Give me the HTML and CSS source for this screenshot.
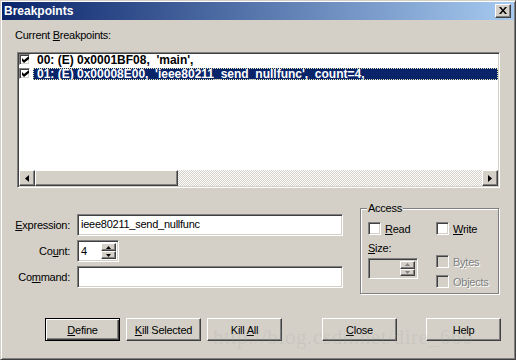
FILE: index.html
```html
<!DOCTYPE html>
<html lang="en">
<head>
  <meta charset="UTF-8">
  <title>Breakpoints</title>
  <link rel="stylesheet" href="styles.css">
</head>
<body>

  <div class="window">
    <div class="titlebar">
      <span class="title">Breakpoints</span>
      <span class="title-close raised">
        <svg width="8" height="7" viewBox="0 0 8 7"><path d="M0 0h2l2 2.5 2-2.5h2L5 3.5 8 7H6L4 4.5 2 7H0l3-3.5z" fill="#000"/></svg>
      </span>
    </div>

    <div class="body">
      <div class="caption">Current <u>B</u>reakpoints:</div>

      <div class="listbox sunken">
        <div class="list-rows">
          <div class="row">
            <span class="list-check sunken">
              <svg width="7" height="7" viewBox="0 0 7 7"><path d="M0 2l2 2 5-4v3L2 7 0 5z" fill="#000"/></svg>
            </span>
            <span class="row-text">00: (E) 0x0001BF08,  'main',</span>
          </div>
          <div class="row">
            <span class="list-check sunken">
              <svg width="7" height="7" viewBox="0 0 7 7"><path d="M0 2l2 2 5-4v3L2 7 0 5z" fill="#000"/></svg>
            </span>
            <span class="row-text selected">01: (E) 0x00008E00,  'ieee80211_send_nullfunc',  count=4,</span>
          </div>
        </div>
        <div class="hscroll">
          <span class="sb-btn raised">
            <svg width="4" height="7" viewBox="0 0 4 7"><path d="M4 0v7L0 3.5z" fill="#000"/></svg>
          </span>
          <span class="sb-thumb raised"></span>
          <span class="sb-track"></span>
          <span class="sb-btn raised">
            <svg width="4" height="7" viewBox="0 0 4 7"><path d="M0 0v7l4-3.5z" fill="#000"/></svg>
          </span>
        </div>
      </div>

      <div class="lower">
        <div class="fields">
          <span class="field-label"><u>E</u>xpression:</span>
          <div class="edit sunken">ieee80211_send_nullfunc</div>

          <span class="field-label">Co<u>u</u>nt:</span>
          <div class="count-box sunken">
            <span class="count-text">4</span>
            <span class="spin">
              <span class="spin-btn raised"><svg width="5" height="3" viewBox="0 0 5 3"><path d="M2.5 0L5 3H0z" fill="#000"/></svg></span>
              <span class="spin-btn raised"><svg width="5" height="3" viewBox="0 0 5 3"><path d="M0 0h5L2.5 3z" fill="#000"/></svg></span>
            </span>
          </div>

          <span class="field-label">Co<u>m</u>mand:</span>
          <div class="edit sunken"></div>
        </div>

        <fieldset class="access">
          <legend>Access</legend>
          <div class="access-cols">
            <div class="access-col first">
              <div class="check-label"><span class="box sunken"></span><span><u>R</u>ead</span></div>
              <div class="size-label"><u>S</u>ize:</div>
              <div class="size-box sunken">
                <span class="spin">
                  <span class="spin-btn raised"><svg width="5" height="3" viewBox="0 0 5 3"><path d="M2.5 0L5 3H0z" fill="#808080"/></svg></span>
                  <span class="spin-btn raised"><svg width="5" height="3" viewBox="0 0 5 3"><path d="M0 0h5L2.5 3z" fill="#808080"/></svg></span>
                </span>
              </div>
            </div>
            <div class="access-col">
              <div class="check-label"><span class="box sunken"></span><span><u>W</u>rite</span></div>
              <div class="check-label disabled bytes"><span class="box sunken"></span><span>B<u>y</u>tes</span></div>
              <div class="check-label disabled objects"><span class="box sunken"></span><span>Objects</span></div>
            </div>
          </div>
        </fieldset>
      </div>

      <div class="buttons">
        <span class="btn default"><span><u>D</u>efine</span></span>
        <span class="btn raised"><span><u>K</u>ill Selected</span></span>
        <span class="btn raised"><span>Kill <u>A</u>ll</span></span>
        <span class="btn raised close"><span><u>C</u>lose</span></span>
        <span class="btn raised help"><span>Help</span></span>
      </div>
    </div>

    <div class="watermark">http://blog.csdn.net/dire_666</div>
  </div>

</body>
</html>
```

FILE: styles.css
```css
* {
  margin: 0;
  padding: 0;
  box-sizing: border-box;
}

body {
  font-family: 'Liberation Sans', Arial, sans-serif;
  font-size: 11px;
  letter-spacing: -0.25px;
  color: #000;
  background: #d4d0c8;
}

/* 3D borders */
.raised {
  background-color: #d4d0c8;
  border: 1px solid;
  border-color: #fff #404040 #404040 #fff;
  box-shadow: inset -1px -1px #808080;
}

.sunken {
  background-color: #fff;
  border: 1px solid;
  border-color: #808080 #fff #fff #808080;
  box-shadow: inset 1px 1px #404040, inset -1px -1px #d4d0c8;
}

.window {
  position: relative;
  width: 516px;
  height: 360px;
  background: #d4d0c8;
  border: 1px solid;
  border-color: #d4d0c8 #404040 #404040 #d4d0c8;
  box-shadow: inset 1px 1px #fff, inset -1px -1px #808080;
  padding: 1px;
  overflow: hidden;
}

/* Title bar */
.titlebar {
  height: 18px;
  display: flex;
  align-items: center;
  justify-content: space-between;
  padding: 0 3px 0 2px;
  background: linear-gradient(to right, #0a246a, #a6caf0);
}

.title {
  color: #fff;
  font-weight: bold;
  font-size: 12px;
  letter-spacing: 0;
}

.title-close {
  width: 16px;
  height: 14px;
  display: flex;
  align-items: center;
  justify-content: center;
  padding-bottom: 1px;
}

.caption {
  margin: 9px 0 0 13px;
  line-height: 13px;
}

.listbox {
  margin: 10px 0 0 15px;
  width: 483px;
  height: 136px;
  padding: 1px;
  display: flex;
  flex-direction: column;
}

.list-rows {
  flex: 1;
}

.row {
  display: flex;
  align-items: flex-start;
  height: 12px;
  margin-bottom: 2px;
}

.list-check {
  width: 11px;
  height: 11px;
  display: flex;
  align-items: center;
  justify-content: center;
  padding-left: 1px;
}

.row-text {
  flex: 1;
  margin-left: 3px;
  padding-left: 4px;
  height: 12px;
  line-height: 12px;
  white-space: pre;
  font-size: 12px;
  font-weight: bold;
  letter-spacing: 0;
}

.row-text.selected {
  background: #0a246a;
  color: #fff;
  outline: 1px dotted #e8e8b0;
  outline-offset: -1px;
}

.hscroll {
  display: flex;
  height: 16px;
}

.sb-btn {
  width: 16px;
  height: 16px;
  display: flex;
  align-items: center;
  justify-content: center;
}

.sb-thumb {
  width: 143px;
  height: 16px;
}

.sb-track {
  flex: 1;
  background: repeating-conic-gradient(#d4d0c8 0 25%, #fff 0 50%) 0 0 / 2px 2px;
}

/* Lower part */
.lower {
  display: flex;
  align-items: flex-start;
  margin-top: 14px;
  padding-left: 10px;
}

.fields {
  margin-top: 12px;
  display: grid;
  grid-template-columns: 58px 266px;
  grid-auto-rows: 22px;
  column-gap: 7px;
  row-gap: 4px;
  align-items: center;
}

.field-label {
  text-align: right;
}

.edit {
  height: 22px;
  line-height: 19px;
  padding-left: 3px;
}

.count-box {
  width: 42px;
  height: 22px;
  display: flex;
  padding: 2px 2px 2px 3px;
}

.count-text {
  flex: 1;
  line-height: 17px;
}

.spin {
  display: flex;
  flex-direction: column;
  width: 15px;
}

.spin-btn {
  flex: 1;
  display: flex;
  align-items: center;
  justify-content: center;
}

/* Access group */
.access {
  margin-left: 17px;
  width: 139px;
  border: 1px solid #808080;
  box-shadow: inset 1px 1px #fff, 1px 1px #fff;
  padding: 7px 4px 5px 7px;
}

.access legend {
  padding: 0 1px;
  margin-left: -1px;
  line-height: 13px;
  background: #d4d0c8;
}

.access-cols {
  display: flex;
}

.access-col {
  display: flex;
  flex-direction: column;
}

.access-col.first {
  width: 68px;
}

.check-label {
  display: flex;
  align-items: center;
  gap: 4px;
  height: 13px;
}

.box {
  width: 13px;
  height: 13px;
}

.size-label {
  margin-top: 7px;
  line-height: 13px;
}

.size-box {
  margin-top: 3px;
  width: 50px;
  height: 21px;
  background: #d4d0c8;
  display: flex;
  justify-content: flex-end;
  padding: 2px;
}

.check-label.disabled {
  color: #808080;
  text-shadow: 1px 1px #fff;
}

.check-label.disabled .box {
  background: #d4d0c8;
}

.bytes {
  margin-top: 20px;
}

.objects {
  margin-top: 7px;
}

/* Buttons */
.buttons {
  display: flex;
  margin-top: 24px;
  padding-left: 43px;
}

.btn {
  width: 75px;
  height: 23px;
  display: flex;
  align-items: center;
  justify-content: center;
  margin-right: 6px;
}

.btn.default {
  background: #d4d0c8;
  border: 1px solid #000;
  box-shadow: inset 1px 1px #fff, inset -1px -1px #404040, inset -2px -2px #808080;
}

.btn.close {
  margin-left: 34px;
}

.btn.help {
  margin-left: 23px;
}

.watermark {
  position: absolute;
  left: 212px;
  top: 324px;
  font-family: 'Liberation Serif', serif;
  font-size: 21px;
  letter-spacing: 0.6px;
  color: rgba(150, 150, 150, 0.18);
  pointer-events: none;
  white-space: nowrap;
}
```
